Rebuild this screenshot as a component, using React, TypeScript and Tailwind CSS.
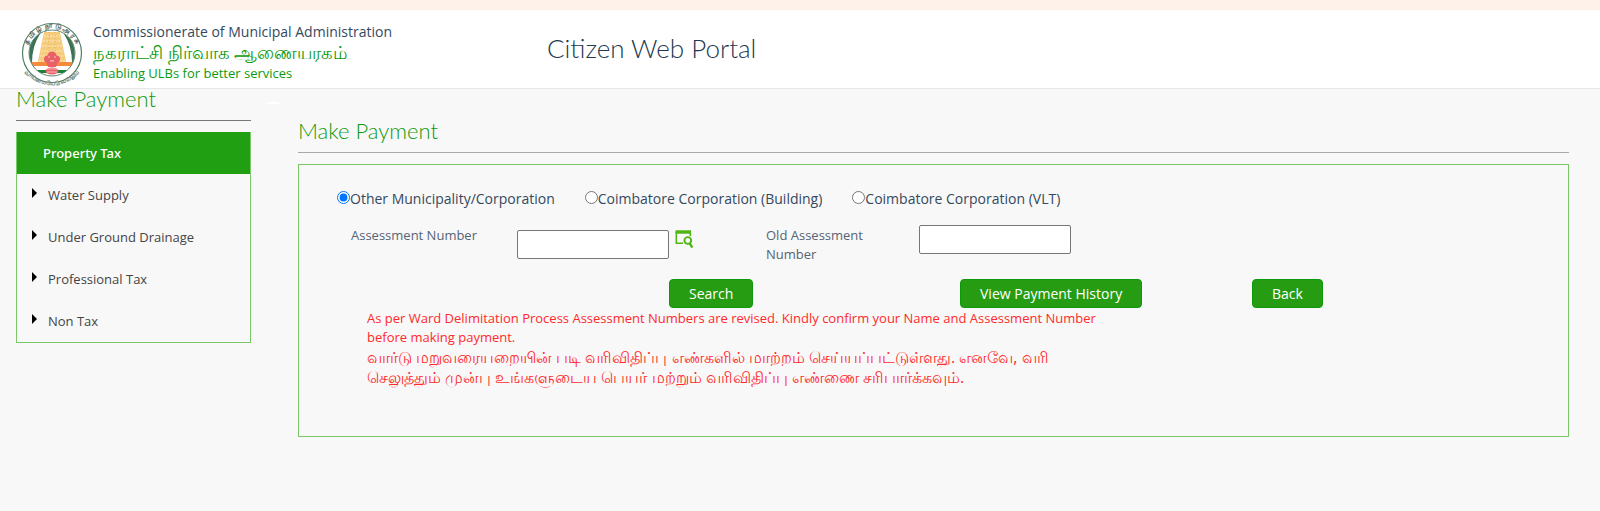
// Citizen Web Portal: Make Payment page
// Header with state emblem, tax type menu on the left, assessment search form on the right
import { clsx } from 'clsx'

// ─── Data ────────────────────────────────────────────────────────────────────

const taxTypes = ['Water Supply', 'Under Ground Drainage', 'Professional Tax', 'Non Tax']

const bodies = [
  { id: 'other', label: 'Other Municipality/Corporation' },
  { id: 'building', label: 'Coimbatore Corporation (Building)' },
  { id: 'vlt', label: 'Coimbatore Corporation (VLT)' },
]

const headingFont = "font-['Lato',sans-serif] font-light"
const buttonStyle = 'h-[29px] rounded bg-[#269c12] border border-[#0c9a0c] px-[19px] text-sm leading-5 font-medium text-white cursor-pointer'
const inputStyle = 'h-[29px] w-[152px] rounded-xs border border-[#767676] bg-white px-1 text-sm'

// ─── Drawings ────────────────────────────────────────────────────────────────

function Emblem() {
  return (
    <svg viewBox="0 0 64 66" className="w-16 shrink-0" role="img" aria-label="Tamil Nadu emblem">
      <defs>
        <path id="ring-top" d="M12 46A25 25 0 1 1 52 46" fill="none" />
        <path id="ring-bottom" d="M5 51Q32 76 59 51" fill="none" />
        <clipPath id="disc"><circle cx="32" cy="31" r="23" /></clipPath>
      </defs>
      <circle cx="32" cy="31" r="29.500" fill="#fff" stroke="#4f7d62" strokeWidth="1.200" />
      <g clipPath="url(#disc)">
        <rect x="8" y="7" width="48" height="48" fill="#fff" />
        <path d="M16 8Q8 24 9 41H12Q12 24 20 12ZM48 8Q56 24 55 41H52Q52 24 44 12Z" fill="#3c7354" />
        <path d="M24 10H40L41 15L47 44H17L23 15Z" fill="#f5cb7c" />
        <path d="M24 14H40M23 19H41M22 24H42M21 29H43M20 34H44M19 39H45" stroke="#fdebc4" strokeWidth="1" strokeDasharray="2 1" />
        <path d="M29 10V42M35 10V42" stroke="#e0a850" strokeWidth="0.800" strokeDasharray="1 2" />
        <rect x="8" y="40" width="48" height="4" fill="#f58a3c" />
        <rect x="8" y="44" width="48" height="4" fill="#fff" />
        <rect x="8" y="48" width="48" height="3" fill="#16823a" />
        <rect x="8" y="51" width="48" height="4" fill="#fff" />
      </g>
      <circle cx="32" cy="31" r="23" fill="none" stroke="#5d8a6e" strokeWidth="1" />
      <g fill="#ea6068">
        <circle cx="32" cy="34" r="4.500" />
        <circle cx="27.500" cy="37" r="3.500" />
        <circle cx="36.500" cy="37" r="3.500" />
        <path d="M26 39H38L36 45H28Z" />
        <ellipse cx="32" cy="49" rx="6.500" ry="3.500" />
      </g>
      <path d="M28 35H30M34 35H36M30 39H34M27 47H37M27 50H37" stroke="#fbd5d5" strokeWidth="0.800" />
      <text fontSize="7" fontWeight="700" fill="#4a6156" textAnchor="middle">
        <textPath href="#ring-top" startOffset="50%">த  மி  ழ்  நா  டு  அ  ர  சு</textPath>
      </text>
      <text fontSize="6" fontWeight="700" fill="#6b7d73" textAnchor="middle">
        <textPath href="#ring-bottom" startOffset="50%">வாய்மையே வெல்லும்</textPath>
      </text>
    </svg>
  )
}

function LookupIcon() {
  return (
    <svg viewBox="0 0 19 19" className="size-[19px]" fill="none" stroke="#4cb512" aria-hidden="true">
      <path d="M0.500 2H16" strokeWidth="3.400" />
      <path d="M1.300 2V13.300H8M15.300 2V6" strokeWidth="1.500" />
      <circle cx="12.800" cy="10.500" r="3.400" strokeWidth="1.900" />
      <path d="M14.800 13.500L17.300 17.700" strokeWidth="2.300" />
    </svg>
  )
}

// ─── Sections ────────────────────────────────────────────────────────────────

function Header() {
  return (
    <header className="flex items-start border-t-10 border-b border-t-[#fdf1e9] border-b-[#e7e7e7] bg-white pl-5 h-[89px]">
      <div className="flex w-[527px] gap-[9px] pt-3">
        <Emblem />
        <div className="text-[#34495e]">
          <p className="text-sm leading-5">Commissionerate of Municipal Administration</p>
          <p className="text-lg leading-5 font-medium text-[#0c9a0c]">நகராட்சி நிர்வாக ஆணையரகம்</p>
          <p className="text-[13px] leading-[22px] text-[#0c9a0c]">Enabling ULBs for better services</p>
        </div>
      </div>
      <h1 className={clsx(headingFont, 'pt-6 text-[26px] leading-7 text-[#22384f]')}>Citizen Web Portal</h1>
    </header>
  )
}

function Sidebar() {
  return (
    <aside className="w-[235px] shrink-0">
      <h2 className={clsx(headingFont, 'h-8 border-b border-[#777] text-[22px] leading-5 text-[#0c9a0c]')}>Make Payment</h2>
      <nav className="mt-[11px] border border-t-0 border-[#7cc66a]">
        <a href="#property-tax" className="block bg-[#219f12] pl-[26px] font-['Noto_Sans',sans-serif] text-[13px] leading-[42px] font-medium text-white">
          Property Tax
        </a>
        <ul>
          {taxTypes.map((type) => (
            <li key={type}>
              <a href="#tax" className="flex items-center gap-[11px] pl-[15px] text-[13px] leading-[42px] text-[#444]">
                <svg viewBox="0 0 5 10" className="mb-1 h-2.5 w-[5px]" aria-hidden="true">
                  <path d="M0 0L5 5L0 10Z" fill="#000" />
                </svg>
                {type}
              </a>
            </li>
          ))}
        </ul>
      </nav>
    </aside>
  )
}

function PaymentForm() {
  return (
    <form className="min-h-[273px] border border-[#7cc66a] pt-6 pl-[38px] text-[13px] leading-[19px] text-[#566474]">
      <div className="flex gap-[30px] text-sm leading-5 font-medium text-[#34495e]">
        {bodies.map((body, i) => (
          <label key={body.id} className="flex items-center">
            <input type="radio" name="body" defaultChecked={i === 0} className="mb-1 size-[13px]" />
            {body.label}
          </label>
        ))}
      </div>

      <div className="mt-4 flex items-start pl-[14px]">
        <label htmlFor="assessment" className="w-[166px] pt-px">Assessment Number</label>
        <div className="flex w-[249px] gap-1.5 pt-[5px]">
          <input id="assessment" type="text" className={inputStyle} />
          <button type="button" aria-label="Find assessment number" className="h-[19px] cursor-pointer">
            <LookupIcon />
          </button>
        </div>
        <label htmlFor="old-assessment" className="w-[153px] pt-px pr-8">Old Assessment Number</label>
        <input id="old-assessment" type="text" className={inputStyle} />
      </div>

      <div className="mt-[15px] flex pl-[332px]">
        <div className="w-[291px]"><button type="button" className={buttonStyle}>Search</button></div>
        <div className="w-[292px]"><button type="button" className={buttonStyle}>View Payment History</button></div>
        <button type="button" className={buttonStyle}>Back</button>
      </div>

      <div className="w-[765px] pt-px pl-[30px] text-[#ff2a2a]">
        <p>
          As per Ward Delimitation Process Assessment Numbers are revised. Kindly confirm your Name and Assessment Number
          before making payment.
        </p>
        <p className="pr-5 text-base leading-5 font-medium">
          வார்டு மறுவரையறையின் படி வரிவிதிப்பு எண்களில் மாற்றம் செய்யப்பட்டுள்ளது. எனவே, வரி
          செலுத்தும் முன்பு உங்களுடைய பெயர் மற்றும் வரிவிதிப்பு எண்ணை சரிபார்க்கவும்.
        </p>
      </div>
    </form>
  )
}

// ─── Page ────────────────────────────────────────────────────────────────────
export default function App() {
  return (
    <div className="min-h-screen bg-[#f8f8f8] font-['Open_Sans','Noto_Sans',sans-serif]">
      <Header />
      <div className="flex pr-[31px] pb-6 pl-4">
        <Sidebar />
        <div className="mt-[13px] mr-[19px] ml-4 h-0.5 w-3 bg-white" />
        <main className="min-w-0 grow pt-8">
          <h2 className={clsx(headingFont, 'mb-[11px] h-8 border-b border-[#aaa] text-[22px] leading-5 text-[#0c9a0c]')}>
            Make Payment
          </h2>
          <PaymentForm />
        </main>
      </div>
    </div>
  )
}
